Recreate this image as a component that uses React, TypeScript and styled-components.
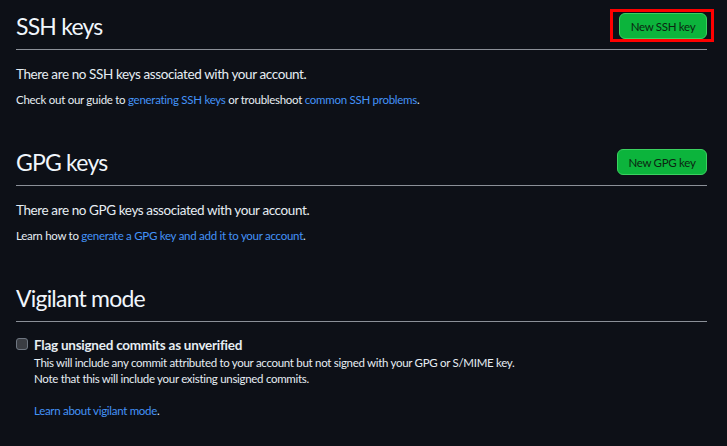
import React from "react";
import styled, { createGlobalStyle } from "styled-components";

const Global = createGlobalStyle`
  html, body { margin: 0; padding: 0; background: #0d1017; }
  body { font-family: Lato, "Noto Sans", sans-serif; color: #e6edf3; }
`;

const Page = styled.div`
  width: 727px;
  height: 446px;
  box-sizing: border-box;
  padding: 8px 20px 0 16px;
  background: #0d1017;
  overflow: hidden;
`;

const Section = styled.section<{ $gap?: number }>`
  margin-top: ${(p) => p.$gap ?? 0}px;
`;

const Header = styled.div`
  display: flex;
  align-items: center;
  justify-content: space-between;
  padding-bottom: 5px;
  border-bottom: 1px solid #8b9098;
`;

const Title = styled.h2`
  margin: 0;
  font-size: 23px;
  letter-spacing: -0.8px;
  line-height: 36px;
  font-weight: 400;
  color: #f0f6fc;
`;

const ButtonWrap = styled.div<{ $marked?: boolean }>`
  position: relative;
  display: flex;
  ${(p) =>
    p.$marked &&
    `&::after {
      content: "";
      position: absolute;
      left: -9px; top: -4px; right: -7px; bottom: -3px;
      border: 3px solid #ff0000;
      pointer-events: none;
    }`}
`;

const GreenButton = styled.button<{ $w: number }>`
  width: ${(p) => p.$w}px;
  height: 26px;
  border-radius: 6px;
  border: 1px solid #3bd160;
  background: #0cb43c;
  color: #0b2611;
  font-family: inherit;
  font-size: 11.5px;
  letter-spacing: -0.3px;
  padding: 0;
  cursor: pointer;
`;

const Lead = styled.p`
  margin: 14px 0 0;
  font-size: 13.5px;
  letter-spacing: -0.4px;
  line-height: 20px;
`;

const Small = styled.p`
  margin: 7px 0 0;
  font-size: 11.5px;
  letter-spacing: -0.28px;
  line-height: 18px;
`;

const Link = styled.a`
  color: #4493f8;
  text-decoration: none;
`;

const CheckRow = styled.div`
  display: flex;
  gap: 6px;
  margin-top: 13px;
`;

const Box = styled.span`
  flex: none;
  width: 12px;
  height: 12px;
  margin-top: 3px;
  border-radius: 3px;
  border: 1px solid #6e7681;
  background: #3a3d43;
  box-sizing: border-box;
`;

const CheckText = styled.div`
  display: flex;
  flex-direction: column;
`;

const CheckLabel = styled.div`
  font-size: 13.5px;
  letter-spacing: -0.25px;
  font-weight: 700;
  line-height: 20px;
`;

const Note = styled.div`
  font-size: 11.5px;
  letter-spacing: -0.3px;
  line-height: 16px;
`;

const NoteLink = styled(Note)`
  margin-top: 16px;
`;

export default function App() {
  return (
    <>
      <Global />
      <Page>
        <Section>
          <Header>
            <Title>SSH keys</Title>
            <ButtonWrap $marked>
              <GreenButton $w={88}>New SSH key</GreenButton>
            </ButtonWrap>
          </Header>
          <Lead>There are no SSH keys associated with your account.</Lead>
          <Small>
            Check out our guide to <Link href="#">generating SSH keys</Link> or troubleshoot{" "}
            <Link href="#">common SSH problems</Link>.
          </Small>
        </Section>
        <Section $gap={35}>
          <Header>
            <Title>GPG keys</Title>
            <ButtonWrap>
              <GreenButton $w={90}>New GPG key</GreenButton>
            </ButtonWrap>
          </Header>
          <Lead>There are no GPG keys associated with your account.</Lead>
          <Small>
            Learn how to <Link href="#">generate a GPG key and add it to your account</Link>.
          </Small>
        </Section>
        <Section $gap={35}>
          <Header>
            <Title>Vigilant mode</Title>
          </Header>
          <CheckRow>
            <Box />
            <CheckText>
              <CheckLabel>Flag unsigned commits as unverified</CheckLabel>
              <Note>
                This will include any commit attributed to your account but not signed with your GPG or S/MIME key.
              </Note>
              <Note>Note that this will include your existing unsigned commits.</Note>
              <NoteLink>
                <Link href="#">Learn about vigilant mode</Link>.
              </NoteLink>
            </CheckText>
          </CheckRow>
        </Section>
      </Page>
    </>
  );
}
